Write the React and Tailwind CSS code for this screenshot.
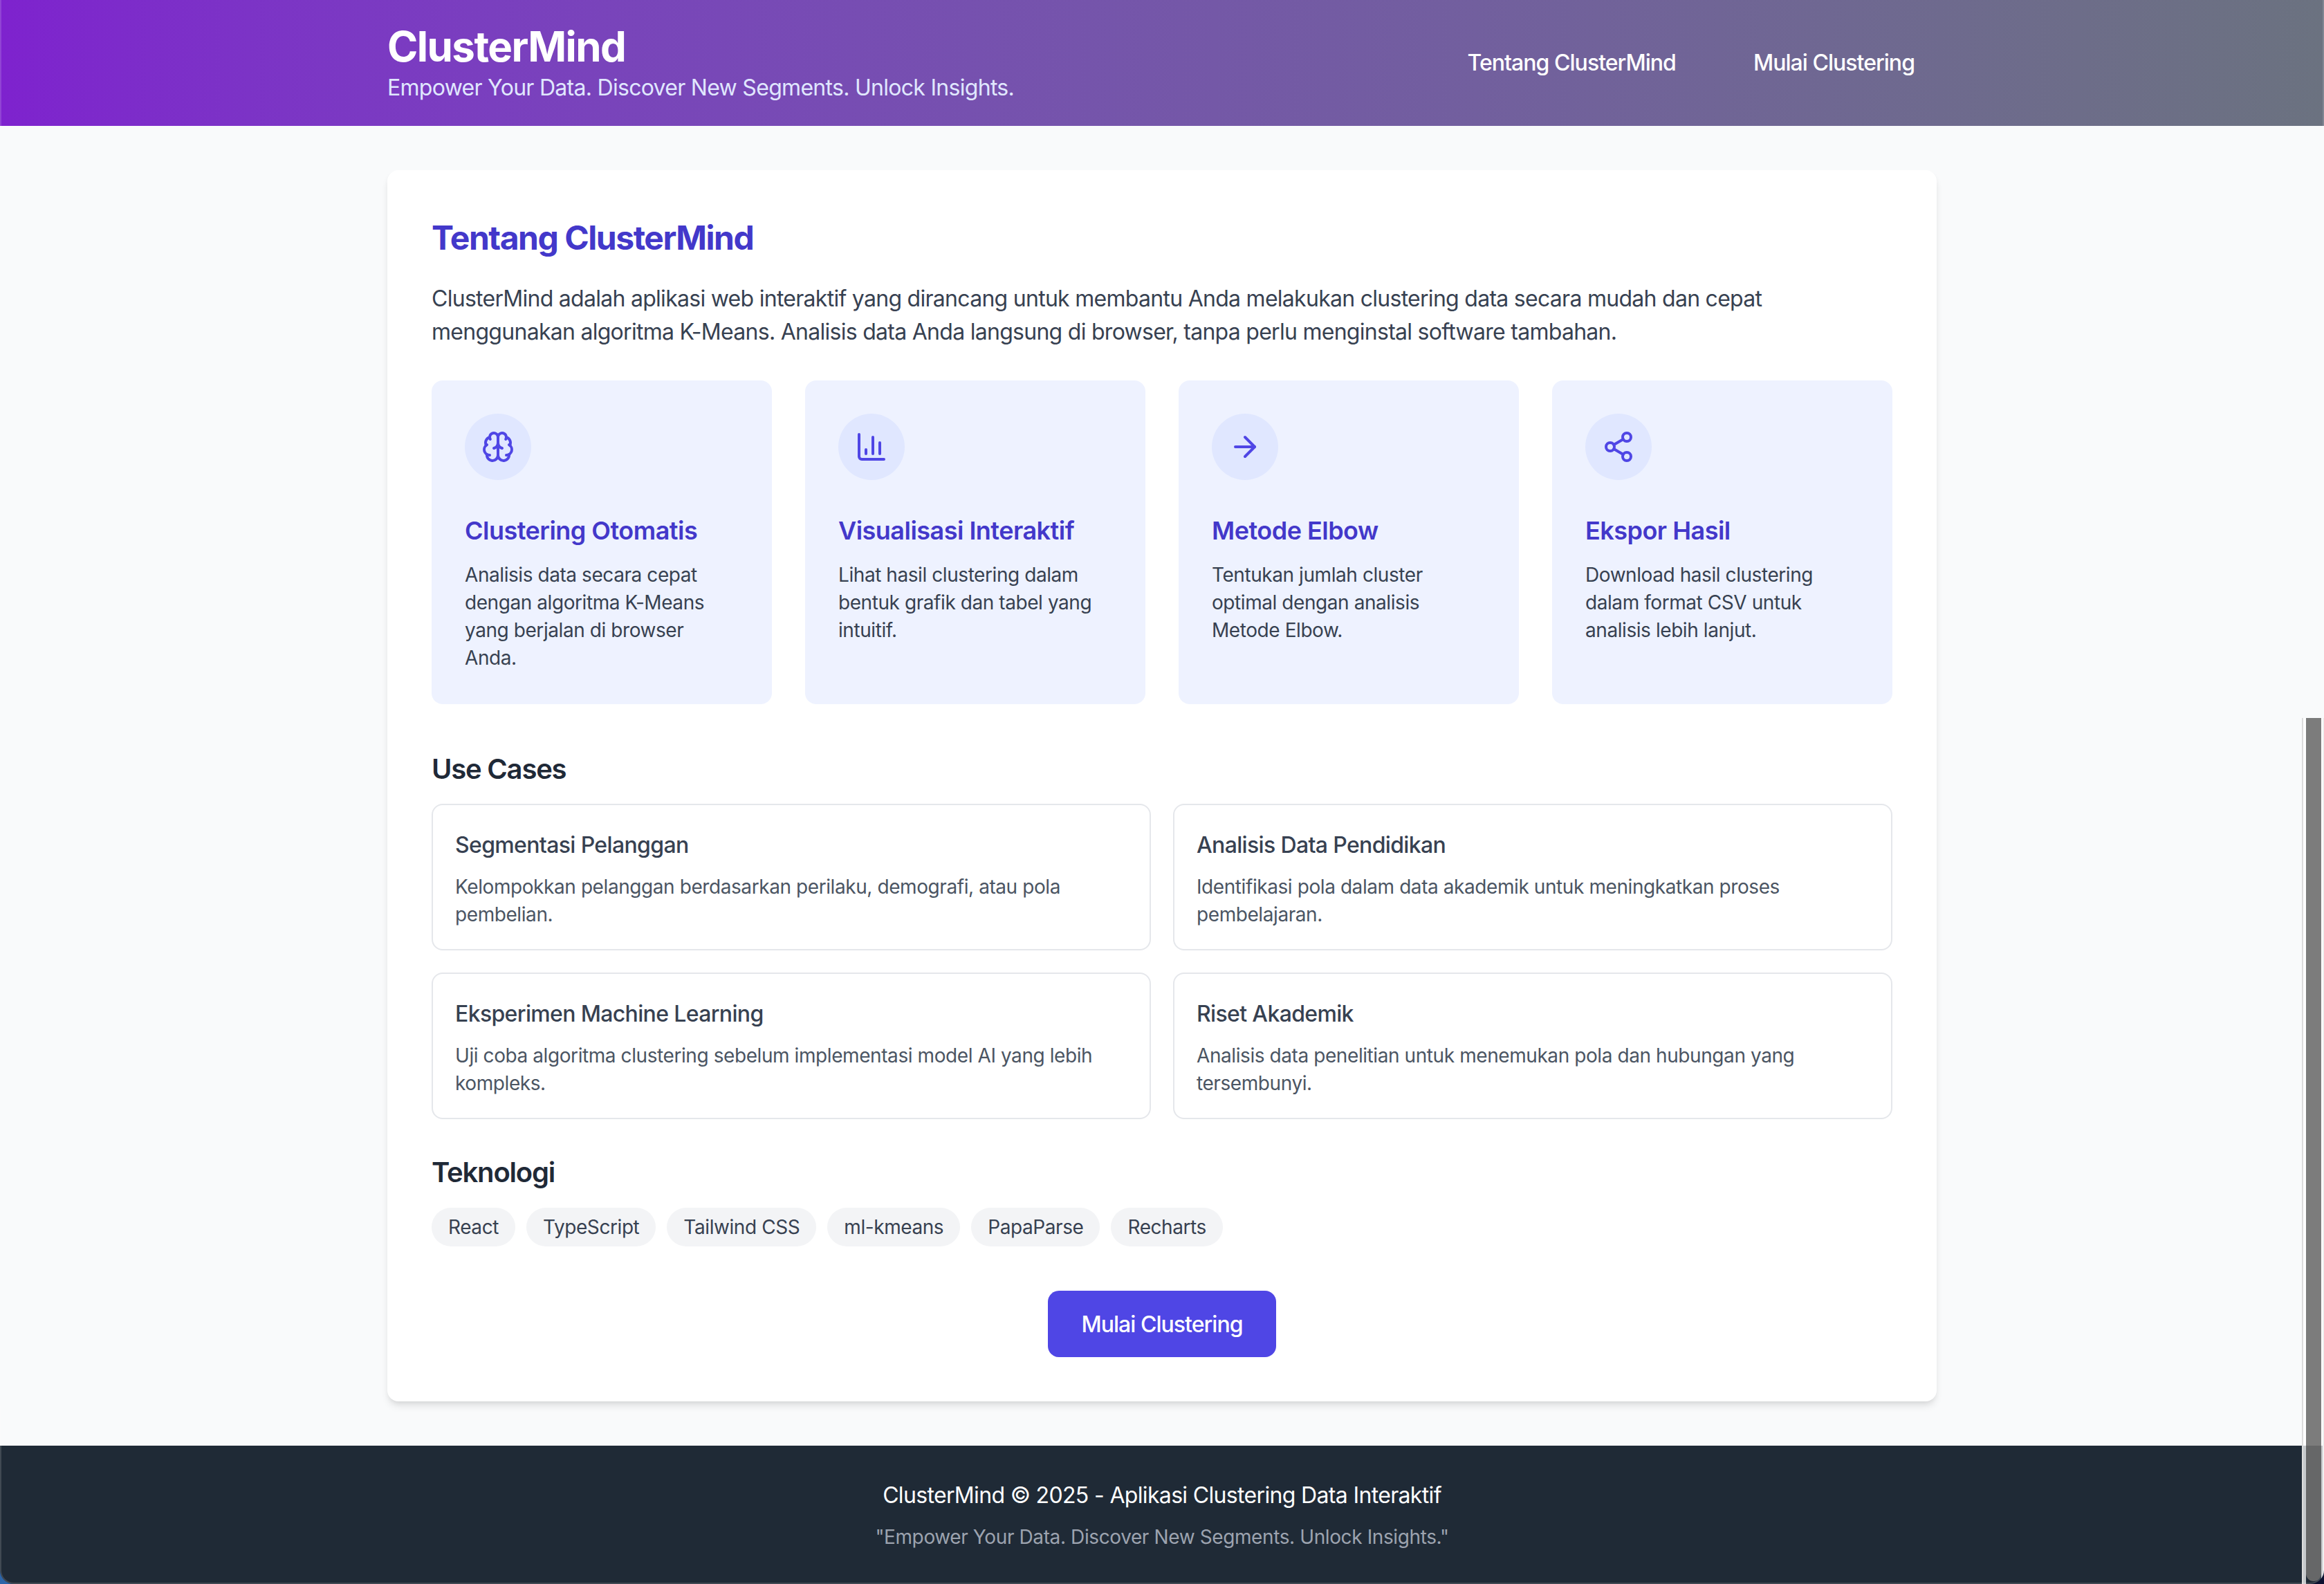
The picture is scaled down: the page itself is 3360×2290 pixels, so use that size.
import React from "react";
import { Brain, ChartColumn, ArrowRight, Share2 } from "lucide-react";

const features = [
  { icon: Brain, title: "Clustering Otomatis", text: "Analisis data secara cepat dengan algoritma K-Means yang berjalan di browser Anda." },
  { icon: ChartColumn, title: "Visualisasi Interaktif", text: "Lihat hasil clustering dalam bentuk grafik dan tabel yang intuitif." },
  { icon: ArrowRight, title: "Metode Elbow", text: "Tentukan jumlah cluster optimal dengan analisis Metode Elbow." },
  { icon: Share2, title: "Ekspor Hasil", text: "Download hasil clustering dalam format CSV untuk analisis lebih lanjut." },
];

const useCases = [
  { title: "Segmentasi Pelanggan", text: "Kelompokkan pelanggan berdasarkan perilaku, demografi, atau pola pembelian." },
  { title: "Analisis Data Pendidikan", text: "Identifikasi pola dalam data akademik untuk meningkatkan proses pembelajaran." },
  { title: "Eksperimen Machine Learning", text: "Uji coba algoritma clustering sebelum implementasi model AI yang lebih kompleks." },
  { title: "Riset Akademik", text: "Analisis data penelitian untuk menemukan pola dan hubungan yang tersembunyi." },
];

const techs = ["React", "TypeScript", "Tailwind CSS", "ml-kmeans", "PapaParse", "Recharts"];

export default function App() {
  return (
    <div className="relative flex h-[2290px] w-[3360px] flex-col overflow-hidden bg-[#f9fafb] font-['Inter',sans-serif]">
      <header className="bg-gradient-to-r from-[#7e22ce] to-[#6b7280] py-[31px] text-white">
        <div className="mx-auto flex w-[2240px] items-center justify-between">
          <div>
            <h1 className="text-[60px] leading-[72px] font-bold tracking-[-1.55px]">ClusterMind</h1>
            <p className="text-[32px] leading-[48px] tracking-[-0.71px] text-[#e0e7ff]">Empower Your Data. Discover New Segments. Unlock Insights.</p>
          </div>
          <nav className="flex gap-12 text-[32px] leading-[48px] font-medium tracking-[-0.97px]">
            <a className="px-8">Tentang ClusterMind</a>
            <a className="px-8">Mulai Clustering</a>
          </nav>
        </div>
      </header>

      <main className="flex-1 py-16">
        <section className="mx-auto w-[2240px] rounded-2xl bg-white p-16 shadow-[0_8px_12px_-2px_rgba(0,0,0,0.1),0_4px_8px_-4px_rgba(0,0,0,0.1)]">
          <h2 className="mb-[30px] pt-[2px] text-[48px] leading-[64px] font-bold tracking-[-1.47px] text-[#4338ca]">Tentang ClusterMind</h2>
          <p className="mb-[46px] pt-[2px] text-[32px] leading-[48px] tracking-[-0.72px] text-[#374151]">
            ClusterMind adalah aplikasi web interaktif yang dirancang untuk membantu Anda melakukan clustering data secara mudah dan cepat menggunakan algoritma K-Means. Analisis data Anda langsung di browser, tanpa perlu menginstal software tambahan.
          </p>

          <div className="mb-16 grid grid-cols-4 gap-12">
            {features.map(({ icon: Icon, title, text }) => (
              <div key={title} className="rounded-2xl bg-[#eef2ff] px-12 pt-12 pb-[47px]">
                <div className="mb-11 flex h-24 w-24 items-center justify-center rounded-full bg-[#e0e7ff]">
                  <Icon className="h-12 w-12 text-[#4f46e5]" strokeWidth={2} />
                </div>
                <h3 className="mb-4 pt-[1px] text-[36px] leading-[56px] font-semibold tracking-[-0.52px] text-[#4338ca]">{title}</h3>
                <p className="text-[28px] leading-[40px] tracking-[-0.43px] text-[#374151]">{text}</p>
              </div>
            ))}
          </div>

          <h3 className="mb-[22px] pt-[2px] text-[40px] leading-[56px] font-semibold tracking-[-1.2px] text-[#1f2937]">Use Cases</h3>
          <div className="mb-12 grid grid-cols-2 gap-8">
            {useCases.map(({ title, text }) => (
              <div key={title} className="rounded-2xl border-2 border-[#e5e7eb] px-8 pt-8 pb-[30px]">
                <h4 className="mb-4 pt-[2px] text-[32px] leading-[48px] font-medium tracking-[-0.65px] text-[#374151]">{title}</h4>
                <p className="text-[28px] leading-[40px] tracking-[-0.42px] text-[#4b5563]">{text}</p>
              </div>
            ))}
          </div>

          <h3 className="mb-[23px] pt-[1px] text-[40px] leading-[56px] font-semibold tracking-[-1.2px] text-[#1f2937]">Teknologi</h3>
          <div className="mb-16 flex flex-wrap gap-4">
            {techs.map((t) => (
              <span key={t} className="rounded-full bg-[#f3f4f6] px-6 py-2 text-[28px] leading-[40px] tracking-[-0.42px] text-[#374151]">{t}</span>
            ))}
          </div>

          <div className="flex justify-center">
            <button className="rounded-2xl bg-[#4f46e5] px-12 pt-[25px] pb-[23px] text-[32px] leading-[48px] font-medium tracking-[-0.97px] text-white">Mulai Clustering</button>
          </div>
        </section>
      </main>

      <footer className="bg-[#1f2a36] py-12 text-center">
        <p className="mb-4 text-[32px] leading-[48px] tracking-[-0.66px] text-white">ClusterMind © 2025 - Aplikasi Clustering Data Interaktif</p>
        <p className="text-[28px] leading-[40px] tracking-[-0.39px] text-[#9ca3af]">"Empower Your Data. Discover New Segments. Unlock Insights."</p>
      </footer>

      {/* overlay scrollbar */}
      <div className="pointer-events-none absolute top-[1038px] right-0 bottom-0 flex w-8">
        <div className="w-0.5 bg-[#dcdcdc]" />
        <div className="w-1 bg-white/75" />
        <div className="mb-1 w-[22px] rounded-b-[20px] bg-[#6e6e6e]/90" />
        <div className="w-0.5 bg-white/75" />
        <div className="w-0.5 bg-[#eeeeee]" />
      </div>

      {/* window edge and rounded corners */}
      <div className="pointer-events-none absolute inset-0 rounded-b-[20px] border-x-2 border-b-2 border-white/15" />
      <svg className="absolute bottom-0 left-0 h-5 w-5" viewBox="0 0 20 20">
        <path d="M0 0A20 20 0 0 0 20 20H0Z" fill="#2d65a8" />
      </svg>
      <svg className="absolute right-0 bottom-0 h-5 w-5" viewBox="0 0 20 20">
        <path d="M20 0A20 20 0 0 1 0 20H20Z" fill="#0b1030" />
      </svg>
    </div>
  );
}
